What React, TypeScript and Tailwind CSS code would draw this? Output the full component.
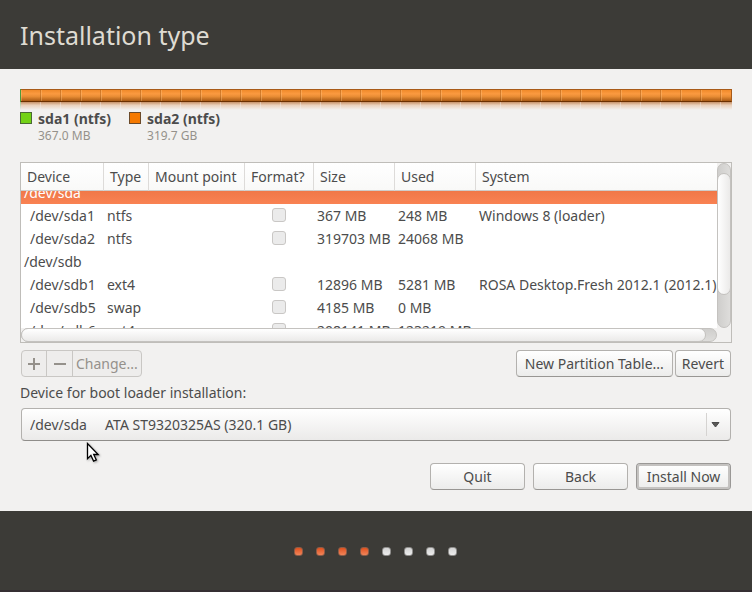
import React, { useLayoutEffect, useRef } from 'react';
import { clsx } from 'clsx';

interface Row {
    device: string;
    disk?: boolean;
    type?: string;
    size?: string;
    used?: string;
    system?: string;
}

const rows: Row[] = [
    { device: '/dev/sda', disk: true },
    { device: '/dev/sda1', type: 'ntfs', size: '367 MB', used: '248 MB', system: 'Windows 8 (loader)' },
    { device: '/dev/sda2', type: 'ntfs', size: '319703 MB', used: '24068 MB' },
    { device: '/dev/sdb', disk: true },
    { device: '/dev/sdb1', type: 'ext4', size: '12896 MB', used: '5281 MB', system: 'ROSA Desktop.Fresh 2012.1 (2012.1)' },
    { device: '/dev/sdb5', type: 'swap', size: '4185 MB', used: '0 MB' },
    { device: '/dev/sdb6', type: 'ext4', size: '208141 MB', used: '123219 MB' },
];

const columns = [
    { name: 'Device', width: 'w-[83px]' },
    { name: 'Type', width: 'w-[45px]' },
    { name: 'Mount point', width: 'w-[96px]' },
    { name: 'Format?', width: 'w-[69px]' },
    { name: 'Size', width: 'w-[81px]' },
    { name: 'Used', width: 'w-[81px]' },
    { name: 'System', width: 'w-auto' },
];

const SELECTED = '/dev/sda';
const STEPS = 8;
const CURRENT_STEP = 4;

function DiskBar() {
    return (
        <div>
            <div className="flex h-[13px]">
                <div className="w-px bg-[#4e9a3c]" />
                <div className="flex-1 border border-[#a85a18] border-b-[#6b3000] border-l-0 bg-[linear-gradient(to_bottom,#f08a2a,#fb9a40_35%,#e88c34_60%,#a85a14)]">
                    <div className="h-full bg-[repeating-linear-gradient(to_right,transparent_0,transparent_19px,#8a4a1055_19px,#8a4a1055_20px)]">
                        <div className="h-full bg-[repeating-linear-gradient(to_right,#ffc88a55_0,#ffc88a55_1px,transparent_1px,transparent_20px)]" />
                    </div>
                </div>
            </div>
            {/* reflection */}
            <div className="flex h-2">
                <div className="w-px bg-linear-to-b from-[#4e9a3c80] to-transparent" />
                <div className="flex-1 bg-[linear-gradient(to_bottom,#b8713ac0,#e0a87870_40%,transparent)]">
                    <div className="h-full bg-[repeating-linear-gradient(to_right,transparent_0,transparent_19px,#f2f1f060_19px,#f2f1f060_20px)]" />
                </div>
            </div>
        </div>
    );
}

function LegendItem({ name, size, color }: { name: string; size: string; color: string }) {
    return (
        <div className="flex gap-[6px]">
            <span className={clsx('mt-[2px] h-3 w-3 border', color)} />
            <div>
                <div className="text-[14px] leading-[18px] font-bold">{name}</div>
                <div className="text-[12px] leading-4 text-[#95918b]">{size}</div>
            </div>
        </div>
    );
}

function PartitionTable() {
    const pane = useRef<HTMLDivElement>(null);

    useLayoutEffect(() => {
        if (pane.current) pane.current.scrollTop = 10;
    }, []);

    return (
        <div className="grid grid-cols-[minmax(0,1fr)_14px] border border-[#bfbdb9] bg-[#f2f1f0]">
            <div ref={pane} className="h-[165px] overflow-hidden bg-white">
                <table className="w-full table-fixed border-separate border-spacing-0 text-left whitespace-nowrap">
                    <thead>
                        <tr>
                            {columns.map((c) => (
                                <th
                                    key={c.name}
                                    className={clsx(
                                        'sticky top-0 z-10 h-[28px] border-r border-b border-r-[#dddbd9] border-b-[#cfcdca] bg-linear-to-b from-white to-[#f9f9f8] p-0 pl-[6px] font-normal last:border-r-0',
                                        c.width,
                                    )}
                                >
                                    {c.name}
                                </th>
                            ))}
                        </tr>
                    </thead>
                    <tbody>
                        {rows.map((r) => (
                            <tr
                                key={r.device}
                                className={clsx('h-[23px]', r.device === SELECTED && 'bg-linear-to-b from-[#e9703f] to-[#f98253] text-white')}
                            >
                                <td className={clsx('p-0', r.disk ? 'pl-[3px]' : 'pl-[9px]')}>{r.device}</td>
                                <td className="p-0 pl-[3px]">{r.type}</td>
                                <td className="p-0" />
                                <td className="p-0 pr-[2px] pb-[2px]">
                                    {!r.disk && (
                                        <input
                                            type="checkbox"
                                            disabled
                                            aria-label={`Format ${r.device}`}
                                            className="mx-auto block h-[14px] w-[14px] appearance-none rounded-[3px] border border-[#c9c7c5] bg-[#ebebeb]"
                                        />
                                    )}
                                </td>
                                <td className="p-0 pl-[3px]">{r.size}</td>
                                <td className="p-0 pl-[3px]">{r.used}</td>
                                <td className="p-0 pl-[3px]">{r.system}</td>
                            </tr>
                        ))}
                    </tbody>
                </table>
            </div>
            <div className="rounded-full border border-[#c4c2bf] bg-linear-to-r from-[#cfcecc] to-[#dedddb] pt-[9px]">
                <div className="-mx-px h-[122px] rounded-full border border-[#c4c2bf] bg-linear-to-r from-white to-[#ebeae9]" />
            </div>
            <div className="h-[14px] rounded-full border border-[#c4c2bf] bg-linear-to-b from-[#cfcecc] to-[#dedddb] pr-[10px]">
                <div className="-mt-px -ml-px h-[14px] rounded-full border border-[#c4c2bf] bg-linear-to-b from-white to-[#ebeae9]" />
            </div>
        </div>
    );
}

function Button({ children, className }: { children: React.ReactNode; className?: string }) {
    return (
        <button
            className={clsx(
                'h-[27px] rounded-[4px] border border-b-[#989693] bg-linear-to-b from-white to-[#ececeb] text-center whitespace-nowrap',
                className ?? 'border-[#b3b1ae]',
            )}
        >
            {children}
        </button>
    );
}

function Pointer() {
    return (
        <svg className="pointer-events-none absolute top-[442px] left-[86px] drop-shadow-[1px_1px_1px_#00000055]" width="14" height="21" viewBox="0 0 14 21">
            <path d="M1.5 1.5v15.2l3.4-3.3 2.7 5.7 2.7-1.2-2.6-5.4h4.5z" fill="#fff" stroke="#000" strokeWidth="1.3" />
        </svg>
    );
}

export default function App() {
    return (
        <div className="relative flex min-h-screen flex-col bg-[#f2f1f0] font-['Noto_Sans',sans-serif] text-[14px] leading-5 text-[#4c4c4c]">
            <header className="flex h-[69px] items-center bg-[#3c3b37] px-5">
                <h1 className="text-[25px] leading-8 text-[#dfdbd2]">Installation type</h1>
            </header>

            <main className="px-5 pt-5 pb-[21px]">
                <DiskBar />
                <div className="mb-[18px] flex gap-[18px]">
                    <LegendItem name="sda1 (ntfs)" size="367.0 MB" color="border-[#4a6a34] bg-[#73d216]" />
                    <LegendItem name="sda2 (ntfs)" size="319.7 GB" color="border-[#6b4a2a] bg-[#f57900]" />
                </div>

                <PartitionTable />

                <div className="mt-[7px] flex items-center justify-between px-px">
                    <div className="flex h-[27px] divide-x divide-[#c9c7c4] rounded-[4px] border border-[#c9c7c4] bg-[#eeedec] text-[#95918b]">
                        <button disabled aria-label="Add" className="flex w-[25px] items-center justify-center">
                            <svg width="12" height="12" viewBox="0 0 12 12">
                                <path d="M6 0v12M0 6h12" stroke="currentColor" strokeWidth="2" />
                            </svg>
                        </button>
                        <button disabled aria-label="Remove" className="flex w-[26px] items-center justify-center">
                            <svg width="12" height="12" viewBox="0 0 12 12">
                                <path d="M0 6h12" stroke="currentColor" strokeWidth="2" />
                            </svg>
                        </button>
                        <button disabled className="px-[3px]">Change...</button>
                    </div>
                    <div className="flex gap-[2px]">
                        <Button className="border-[#b3b1ae] px-2">New Partition Table...</Button>
                        <Button className="border-[#b3b1ae] px-[6px]">Revert</Button>
                    </div>
                </div>

                <label htmlFor="bootloader" className="mt-[6px] block">
                    Device for boot loader installation:
                </label>
                <div className="relative mx-px mt-[5px]">
                    <select
                        id="bootloader"
                        className="block h-[33px] w-full appearance-none rounded-[4px] border border-[#b3b1ae] border-b-[#8f8d8a] bg-linear-to-b from-white to-[#ebeae9] pl-2"
                    >
                        <option>{'/dev/sda\u00a0\u00a0\u00a0\u00a0\u00a0ATA ST9320325AS (320.1 GB)'}</option>
                    </select>
                    <div className="pointer-events-none absolute inset-y-[5px] right-0 flex w-[25px] items-center border-l border-[#d5d3d1] pl-1">
                        <svg width="9" height="6" viewBox="0 0 9 6">
                            <path d="M1 .5h7L4.500 5z" fill="#5a5957" stroke="#4c4c4c" />
                        </svg>
                    </div>
                </div>

                <div className="mt-[22px] flex justify-end gap-2 pr-px">
                    <Button className="w-[95px] border-[#b3b1ae]">Quit</Button>
                    <Button className="w-[95px] border-[#b3b1ae]">Back</Button>
                    <Button className="w-[95px] border-[#9a9896] ring-2 ring-[#c4c2c0] ring-inset">Install Now</Button>
                </div>
            </main>

            <footer className="flex flex-1 justify-center gap-[13px] border-b-2 border-[#352f33] bg-[#3c3b37] pt-9 pr-px">
                {Array.from({ length: STEPS }, (_, i) => (
                    <span
                        key={i}
                        className={clsx(
                            'h-[9px] w-[9px] rounded-[3px] border',
                            i < CURRENT_STEP
                                ? 'border-[#8d5c48] bg-linear-to-b from-[#e0501a] to-[#f08458]'
                                : 'border-[#8f8e8c] bg-linear-to-b from-[#d4d4d4] to-[#ececec]',
                        )}
                    />
                ))}
            </footer>

            <Pointer />
        </div>
    );
}
